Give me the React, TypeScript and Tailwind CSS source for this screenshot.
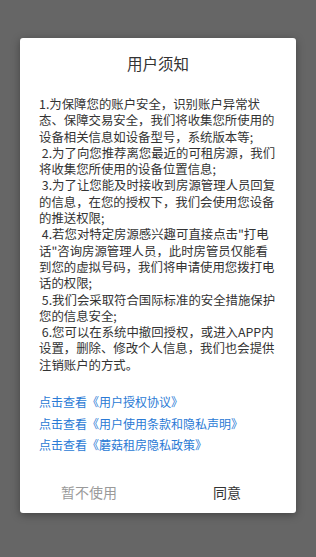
import React from 'react'

const lines = [
  '1.为保障您的账户安全，识别账户异常状',
  '态、保障交易安全，我们将收集您所使用的',
  '设备相关信息如设备型号，系统版本等;',
  ' 2.为了向您推荐离您最近的可租房源，我们',
  '将收集您所使用的设备位置信息;',
  ' 3.为了让您能及时接收到房源管理人员回复',
  '的信息，在您的授权下，我们会使用您设备',
  '的推送权限;',
  ' 4.若您对特定房源感兴趣可直接点击"打电',
  '话"咨询房源管理人员，此时房管员仅能看',
  '到您的虚拟号码，我们将申请使用您拨打电',
  '话的权限;',
  ' 5.我们会采取符合国际标准的安全措施保护',
  '您的信息安全;',
  ' 6.您可以在系统中撤回授权，或进入APP内',
  '设置，删除、修改个人信息，我们也会提供',
  '注销账户的方式。',
]

const links = ['点击查看《用户授权协议》', '点击查看《用户使用条款和隐私声明》', '点击查看《蘑菇租房隐私政策》']

export default function App() {
  return (
    <div
      className="w-[316px] h-[557px] bg-[#666666] pt-[38px] px-[20px]"
      style={{ fontFamily: '"Noto Sans CJK SC", "Noto Sans", sans-serif' }}
    >
      <div className="bg-white rounded-[3px] shadow-[0_2px_8px_rgba(0,0,0,0.35)]">
        <h1 className="pt-[14px] text-center text-[15.5px] leading-[22px] text-[#333333]">用户须知</h1>

        <div className="mt-[22px] px-[19px] text-[12.4px] leading-[16.3px] text-[#333333]">
          {lines.map((l, i) => (
            <div key={i} className="whitespace-pre">
              {l}
            </div>
          ))}
        </div>

        <div className="mt-[18px] px-[19px]">
          {links.map((l) => (
            <div key={l} className="text-[12px] leading-[21.5px] text-[#2a7ad5]">
              {l}
            </div>
          ))}
        </div>

        <div className="mt-[17px] flex h-[40px]">
          <button className="flex-1 text-[14px] text-[#9a9a9a]">暂不使用</button>
          <button className="flex-1 text-[14px] text-[#333333]">同意</button>
        </div>
      </div>
    </div>
  )
}
